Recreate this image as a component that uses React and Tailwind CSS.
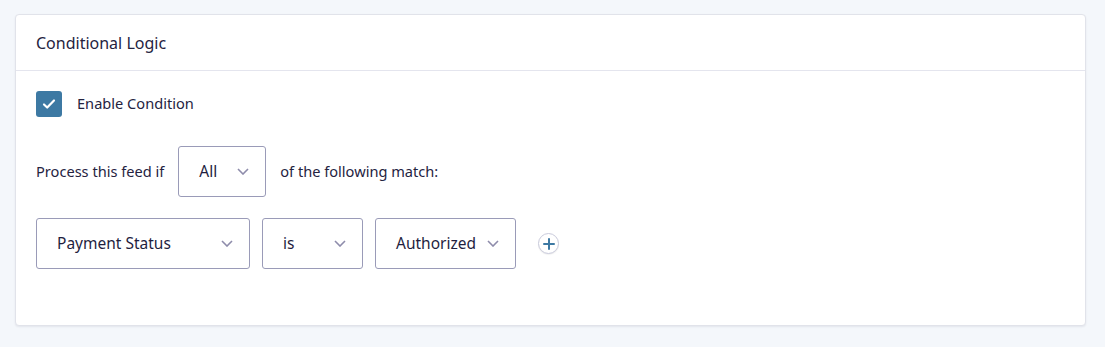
const Chevron = () => (
    <svg className="w-[12px] h-[7px] text-[#8e8cab]" viewBox="0 0 12 7" fill="none" stroke="currentColor" strokeWidth={1.6}>
        <path d="M1 1l5 5 5-5" />
    </svg>
);

const Select = ({ value, width }) => (
    <div className={`${width} h-[51px] flex items-center justify-between pl-5 pr-[16px] border border-[#9a9bb8] rounded-[3px] bg-white text-[15.5px] text-[#1f1e3f]`}>
        <span>{value}</span>
        <Chevron />
    </div>
);

const App = () => {
    return (
        <div className="min-h-screen bg-[#f4f7fb] pt-[14px] px-[15px] font-['Noto_Sans',sans-serif]">
            <div className="w-[1071px] h-[312px] bg-white border border-[#e1e3ea] rounded-[4px] shadow-[0_1px_2px_rgba(30,30,70,0.08)]">
                {/* Header */}
                <div className="h-[56px] flex items-center px-5 border-b border-[#e4e5ee]">
                    <h2 className="text-[16px] text-[#25233f]">Conditional Logic</h2>
                </div>

                <div className="px-5 pt-5">
                    {/* Enable */}
                    <label className="flex items-center gap-[15px]">
                        <span className="w-[26px] h-[26px] rounded-[3px] bg-[#3d79a3] flex items-center justify-center">
                            <svg className="w-[14px] h-[14px] text-white" viewBox="0 0 14 14" fill="none" stroke="currentColor" strokeWidth={2.2} strokeLinecap="round" strokeLinejoin="round">
                                <path d="M2 7.5l3.2 3L12 3.5" />
                            </svg>
                        </span>
                        <span className="text-[14.6px] text-[#25233f]">Enable Condition</span>
                    </label>

                    {/* Match type */}
                    <div className="flex items-center mt-[29px] text-[14.6px] text-[#25233f]">
                        <span>Process this feed if</span>
                        <div className="ml-[14px]">
                            <Select value="All" width="w-[88px]" />
                        </div>
                        <span className="ml-[14px]">of the following match:</span>
                    </div>

                    {/* Rule row */}
                    <div className="flex items-center gap-3 mt-[21px]">
                        <Select value="Payment Status" width="w-[214px]" />
                        <Select value="is" width="w-[101px]" />
                        <Select value="Authorized" width="w-[141px]" />
                        <button className="ml-[10px] w-[21px] h-[21px] rounded-full border border-[#c9cadb] bg-white flex items-center justify-center shadow-[0_1px_1px_rgba(0,0,0,0.06)]">
                            <svg className="w-[12px] h-[12px] text-[#3d79a3]" viewBox="0 0 12 12" fill="none" stroke="currentColor" strokeWidth={2} strokeLinecap="round">
                                <path d="M6 1v10M1 6h10" />
                            </svg>
                        </button>
                    </div>
                </div>
            </div>
        </div>
    );
};

export default App;
